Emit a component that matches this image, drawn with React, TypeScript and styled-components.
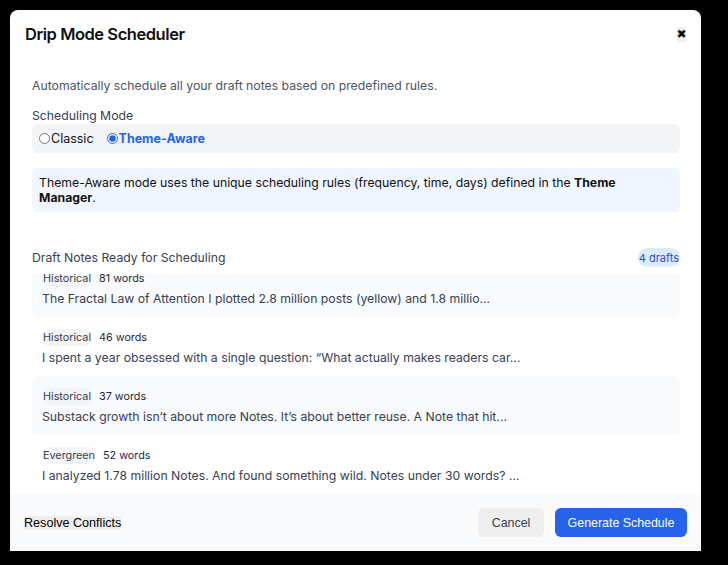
import { useEffect, useRef } from 'react';
import styled, { createGlobalStyle } from 'styled-components';

const GlobalStyle = createGlobalStyle`
    html, body {
        margin: 0;
        padding: 0;
        background: #000;
    }
    body {
        font-family: Inter, 'Noto Sans', sans-serif;
        -webkit-font-smoothing: antialiased;
    }
    * {
        box-sizing: border-box;
    }
`;

const drafts = [
    { tag: 'Historical', words: 81, text: 'The Fractal Law of Attention I plotted 2.8 million posts (yellow) and 1.8 millio...' },
    { tag: 'Historical', words: 46, text: 'I spent a year obsessed with a single question: “What actually makes readers car...' },
    { tag: 'Historical', words: 37, text: 'Substack growth isn’t about more Notes. It’s about better reuse. A Note that hit...' },
    { tag: 'Evergreen', words: 52, text: 'I analyzed 1.78 million Notes. And found something wild. Notes under 30 words? ...' },
];

export default function App() {
    const listRef = useRef<HTMLDivElement>(null);

    // the list is shown scrolled to its end
    useEffect(() => {
        if (listRef.current) listRef.current.scrollTop = listRef.current.scrollHeight;
    }, []);

    return (
        <Page>
            <GlobalStyle />
            <Modal>
                <Header>
                    <Title>Drip Mode Scheduler</Title>
                    <CloseButton>✖</CloseButton>
                </Header>

                <Body>
                    <Description>Automatically schedule all your draft notes based on predefined rules.</Description>
                    <Label>Scheduling Mode</Label>
                    <RadioGroup>
                        <RadioOption>
                            <input type="radio" name="mode" />
                            Classic
                        </RadioOption>
                        <RadioOption $active>
                            <input type="radio" name="mode" defaultChecked />
                            Theme-Aware
                        </RadioOption>
                    </RadioGroup>

                    <InfoBox>
                        Theme-Aware mode uses the unique scheduling rules (frequency, time, days) defined in the{' '}
                        <strong>Theme Manager</strong>.
                    </InfoBox>

                    <ListHeader>
                        <ListTitle>Draft Notes Ready for Scheduling</ListTitle>
                        <CountBadge>4 drafts</CountBadge>
                    </ListHeader>

                    <DraftList ref={listRef}>
                        {drafts.map((d, i) => (
                            <DraftItem key={i} $striped={i % 2 === 0}>
                                <DraftMeta>
                                    <Tag>{d.tag}</Tag>
                                    <WordCount>{d.words} words</WordCount>
                                </DraftMeta>
                                <DraftText>{d.text}</DraftText>
                            </DraftItem>
                        ))}
                    </DraftList>
                </Body>

                <Footer>
                    <PlainButton>Resolve Conflicts</PlainButton>
                    <FooterActions>
                        <CancelButton>Cancel</CancelButton>
                        <PrimaryButton>Generate Schedule</PrimaryButton>
                    </FooterActions>
                </Footer>
            </Modal>
        </Page>
    );
}

const Page = styled.div`
    padding: 10px;
    min-height: 565px;
`;

const Modal = styled.div`
    width: 691px;
    height: 541px;
    display: flex;
    flex-direction: column;
    background: #fff;
    border-radius: 8px 8px 0 0;
    overflow: hidden;
`;

const Header = styled.div`
    height: 48px;
    flex-shrink: 0;
    display: flex;
    justify-content: space-between;
    align-items: center;
    padding: 0 15px;
`;

const Title = styled.h2`
    margin: 0;
    font-size: 16.5px;
    font-weight: 600;
    letter-spacing: -0.45px;
    color: #111;
`;

const CloseButton = styled.button`
    border: none;
    background: #efefef;
    padding: 1px 0;
    width: 9px;
    font-family: 'DejaVu Sans', sans-serif;
    font-size: 12px;
    line-height: 13px;
    color: #000;
    display: flex;
    justify-content: center;
    overflow: visible;
`;

const Body = styled.div`
    flex: 1;
    display: flex;
    flex-direction: column;
    min-height: 0;
    padding: 20px 21px 0 22px;
`;

const Description = styled.p`
    margin: 0 0 14px;
    font-size: 12.25px;
    line-height: 16px;
    color: #4b5563;
`;

const Label = styled.div`
    font-size: 12.25px;
    line-height: 16px;
    color: #374151;
`;

const RadioGroup = styled.div`
    height: 29px;
    display: flex;
    align-items: center;
    gap: 13px;
    padding: 0 7px;
    background: #f3f4f6;
    border-radius: 6px;
`;

const RadioOption = styled.label<{ $active?: boolean }>`
    display: flex;
    align-items: center;
    font-size: 12.5px;
    font-weight: ${(p) => (p.$active ? 700 : 400)};
    color: ${(p) => (p.$active ? '#2563eb' : '#111')};

    input {
        margin: 0 1px 0 0;
        width: 11px;
        height: 11px;
        accent-color: #2563eb;
    }
`;

const InfoBox = styled.div`
    margin-top: 15px;
    padding: 7px 7px;
    background: #eff6ff;
    border-radius: 6px;
    font-size: 12.25px;
    line-height: 15px;
    color: #111;

    strong {
        font-weight: 700;
    }
`;

const ListHeader = styled.div`
    margin-top: 36px;
    height: 19px;
    display: flex;
    justify-content: space-between;
    align-items: center;
`;

const ListTitle = styled.div`
    font-size: 12.25px;
    color: #374151;
`;

const CountBadge = styled.span`
    height: 19px;
    display: flex;
    align-items: center;
    padding: 0 1px;
    border-radius: 10px;
    background: #dbeafe;
    color: #2f4fc4;
    font-size: 11px;
`;

const DraftList = styled.div`
    margin-top: 7px;
    flex: 1;
    min-height: 0;
    overflow: hidden;
`;

const DraftItem = styled.div<{ $striped: boolean }>`
    padding: 10px 10px;
    border-radius: 6px;
    background: ${(p) => (p.$striped ? '#f9fafb' : '#fff')};
`;

const DraftMeta = styled.div`
    height: 21px;
    display: flex;
    align-items: center;
    gap: 7px;
    margin-bottom: 2px;
`;

const Tag = styled.span`
    padding: 2px 1px;
    border-radius: 8px;
    background: #f3f4f6;
    font-size: 10.8px;
    color: #374151;
`;

const WordCount = styled.span`
    font-size: 10.8px;
    color: #1f2937;
`;

const DraftText = styled.div`
    font-size: 12.25px;
    line-height: 16px;
    color: #374151;
    white-space: nowrap;
    overflow: hidden;
`;

const Footer = styled.div`
    height: 57px;
    flex-shrink: 0;
    display: flex;
    justify-content: space-between;
    align-items: center;
    padding: 0 14px;
    background: #f9fafb;
`;

const FooterActions = styled.div`
    display: flex;
    gap: 11px;
`;

const PlainButton = styled.button`
    border: none;
    padding: 0;
    background: #efefef;
    font-family: 'Liberation Sans', Arial, sans-serif;
    font-size: 12.6px;
    color: #000;
`;

const BaseButton = styled.button`
    height: 29px;
    border: none;
    border-radius: 6px;
    font-family: 'Liberation Sans', Arial, sans-serif;
    font-size: 12.4px;
`;

const CancelButton = styled(BaseButton)`
    width: 66px;
    background: #efefef;
    color: #374151;
`;

const PrimaryButton = styled(BaseButton)`
    width: 132px;
    background: #2563eb;
    color: #fff;
`;
